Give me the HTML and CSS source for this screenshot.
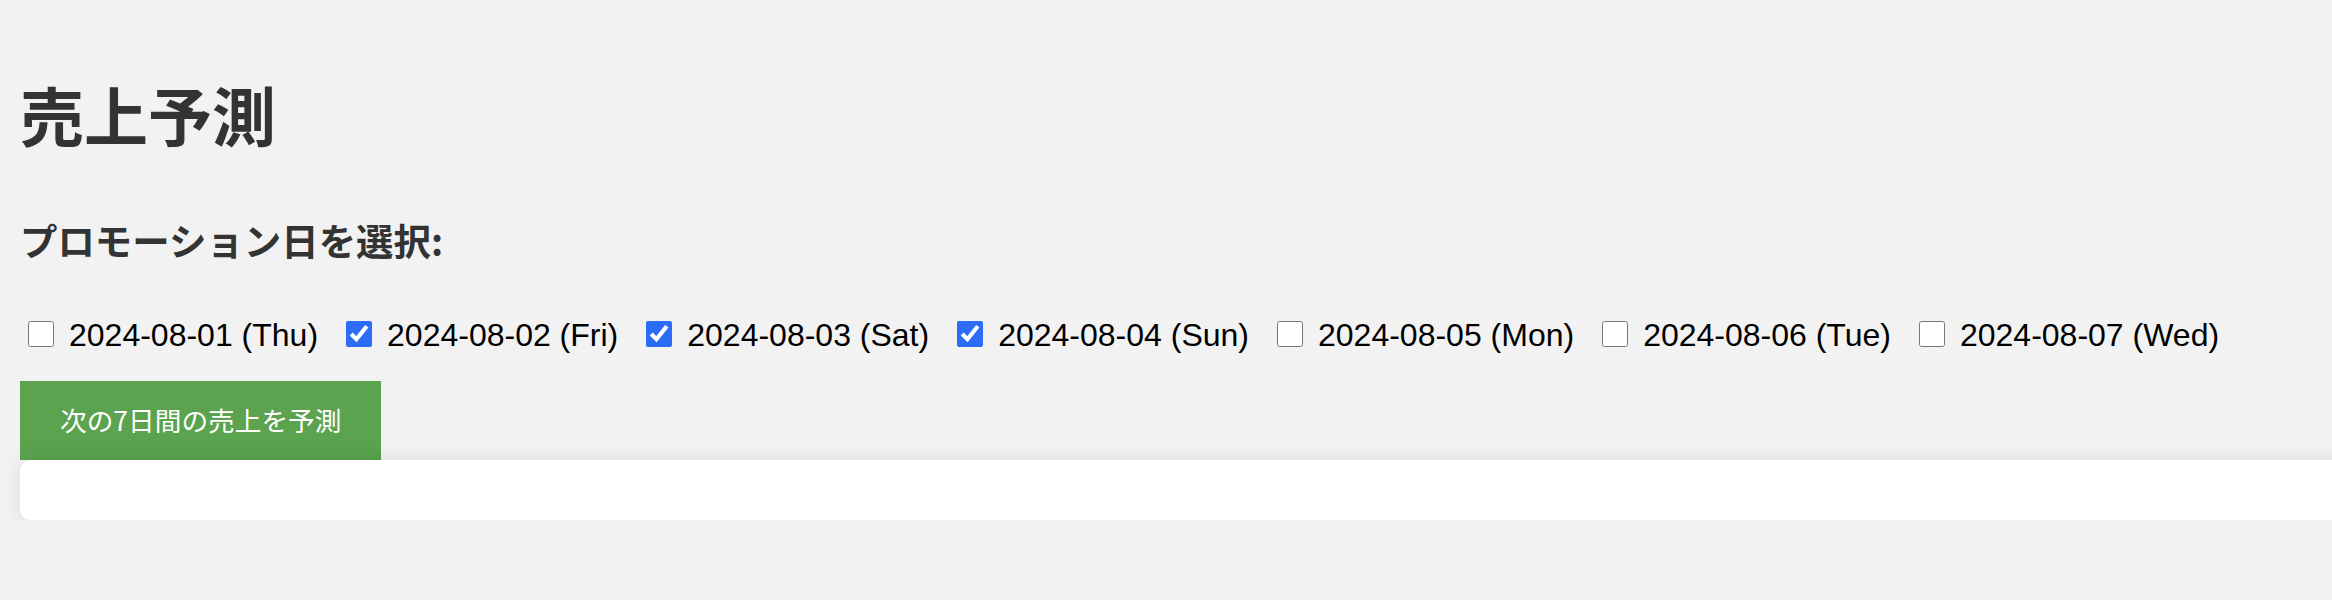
FILE: index.html
```html
<!DOCTYPE html>
<html lang="ja">
<head>
<meta charset="utf-8">
<title>売上予測</title>
<link rel="stylesheet" href="styles.css">
</head>
<body>
  <h1 class="title">売上予測</h1>
  <h3 class="subtitle">プロモーション日を選択:</h3>
  <div class="dates">
    <label class="date"><input type="checkbox" class="check"><span class="date-text">2024-08-01 (Thu)</span></label>
    <label class="date"><input type="checkbox" class="check" checked><span class="date-text">2024-08-02 (Fri)</span></label>
    <label class="date"><input type="checkbox" class="check" checked><span class="date-text">2024-08-03 (Sat)</span></label>
    <label class="date"><input type="checkbox" class="check" checked><span class="date-text">2024-08-04 (Sun)</span></label>
    <label class="date"><input type="checkbox" class="check"><span class="date-text">2024-08-05 (Mon)</span></label>
    <label class="date"><input type="checkbox" class="check"><span class="date-text">2024-08-06 (Tue)</span></label>
    <label class="date"><input type="checkbox" class="check"><span class="date-text">2024-08-07 (Wed)</span></label>
  </div>
  <button class="predict" type="button">次の7日間の売上を予測</button>
  <div class="result"></div>
</body>
</html>
```
FILE: styles.css
```css
html, body {
  overflow-x: hidden;
}

body {
  margin: 0;
  padding: 0 20px;
  background: #f2f2f2;
  font-family: "Liberation Sans", "Noto Sans CJK JP", sans-serif;
  color: #333;
}

.title {
  margin: 67px 0 0;
  font-family: "Noto Sans CJK JP", sans-serif;
  font-size: 64px;
  font-weight: 700;
  line-height: 1.45;
  color: #333;
}

.subtitle {
  margin: 53px 0 0;
  font-family: "Noto Sans CJK JP", sans-serif;
  font-size: 37.44px;
  font-weight: 700;
  line-height: 1.45;
  color: #333;
}

.dates {
  display: flex;
  align-items: center;
  margin-top: 50px;
}

.date {
  display: flex;
  align-items: center;
  margin-right: 20px;
  font-family: "Liberation Sans", sans-serif;
  font-size: 32px;
  line-height: 37px;
  color: #000;
  white-space: nowrap;
}

.check {
  width: 26px;
  height: 26px;
  margin: 0 6px 4px 8px;
  accent-color: #2c6cf6;
}

.date-text {
  padding-left: 9px;
}

.predict {
  display: block;
  margin: 27px 0 0;
  padding: 19px 40px 21px;
  border: none;
  border-radius: 0;
  background: #5ba34f;
  color: #fff;
  font-family: "Noto Sans CJK JP", sans-serif;
  font-size: 26.67px;
  line-height: 39px;
  cursor: pointer;
}

.result {
  width: 100%;
  padding: 30px;
  background: #fff;
  border-radius: 10px;
  box-shadow: 0 0 20px rgba(0, 0, 0, 0.1);
}
```
